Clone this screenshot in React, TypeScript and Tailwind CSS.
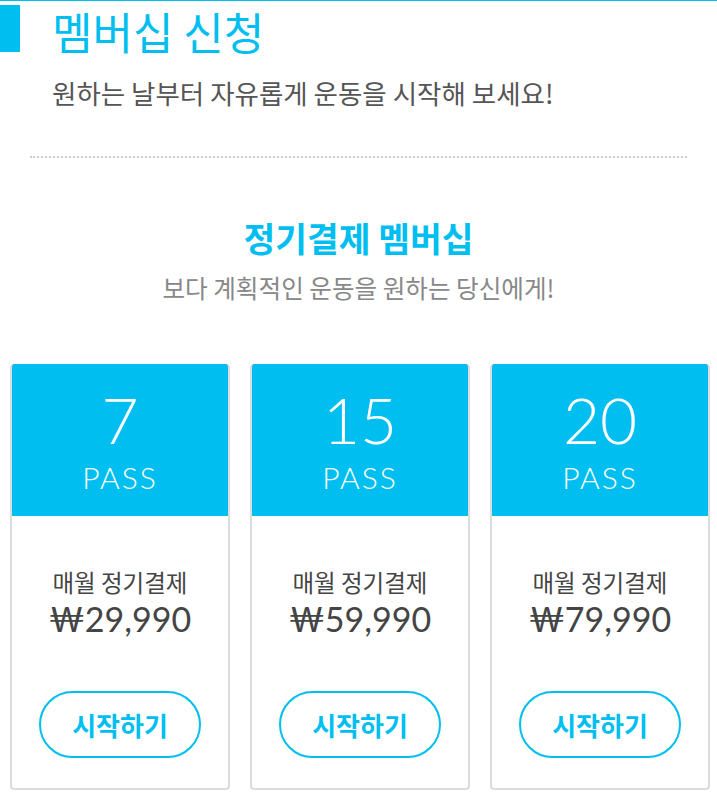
const KR = "font-['Noto_Sans_CJK_KR','Noto_Sans',sans-serif]";
const NUM = "font-['Lato','Noto_Sans_CJK_KR',sans-serif]";

const plans = [
  { count: "7", price: "₩29,990" },
  { count: "15", price: "₩59,990" },
  { count: "20", price: "₩79,990" },
];

function PlanCard({ count, price }: { count: string; price: string }) {
  return (
    <div className="flex flex-col overflow-hidden rounded-[4px] border-2 border-t-0 border-[#dcdcdc] bg-white">
      <div className="-mx-[2px] flex h-[152px] flex-col items-center bg-[#00bff0] text-white">
        <div className={`${NUM} mt-[18px] text-[64px] font-light leading-[76px]`}>{count}</div>
        <div className={`${NUM} mt-[2px] text-[30px] font-light leading-[34px] tracking-[2px]`}>PASS</div>
      </div>
      <div className="flex flex-col items-center pb-[30px]">
        <div className={`${KR} mt-[50px] text-[23.5px] leading-[32px] text-[#444]`}>매월 정기결제</div>
        <div className={`${NUM} text-[34px] leading-[42px] text-[#444]`}>{price}</div>
        <button
          type="button"
          className={`${KR} mt-[51px] h-[67px] w-[162px] rounded-full border-2 border-[#00bff0] text-[26px] font-bold text-[#00bff0]`}
        >
          시작하기
        </button>
      </div>
    </div>
  );
}

export default function App() {
  return (
    <div className="min-h-[797px] w-full border-t border-[#00bff0] bg-white">
      <div className="flex items-start">
        <div className="mt-[4px] h-[47px] w-[20px] bg-[#00bff0]" />
        <div className="ml-[32px] mt-[1px]">
          <h1 className={`${KR} text-[44px] font-normal leading-[58px] text-[#00bff0]`}>멤버십 신청</h1>
          <p className={`${KR} mt-[15px] text-[26.5px] leading-[36px] text-[#555]`}>
            원하는 날부터 자유롭게 운동을 시작해 보세요!
          </p>
        </div>
      </div>

      <div className="mx-[30px] mt-[45px] border-t-2 border-dotted border-[#cccccc]" />

      <div className="mt-[56px] flex flex-col items-center">
        <h2 className={`${KR} text-[34.5px] font-bold leading-[46px] text-[#00bff0]`}>정기결제 멤버십</h2>
        <p className={`${KR} mt-[10px] text-[24.6px] leading-[34px] text-[#888]`}>
          보다 계획적인 운동을 원하는 당신에게!
        </p>
      </div>

      <div className="mt-[60px] grid grid-cols-3 gap-5 pl-[10px] pr-[7px]">
        {plans.map((p) => (
          <PlanCard key={p.count} count={p.count} price={p.price} />
        ))}
      </div>
    </div>
  );
}
